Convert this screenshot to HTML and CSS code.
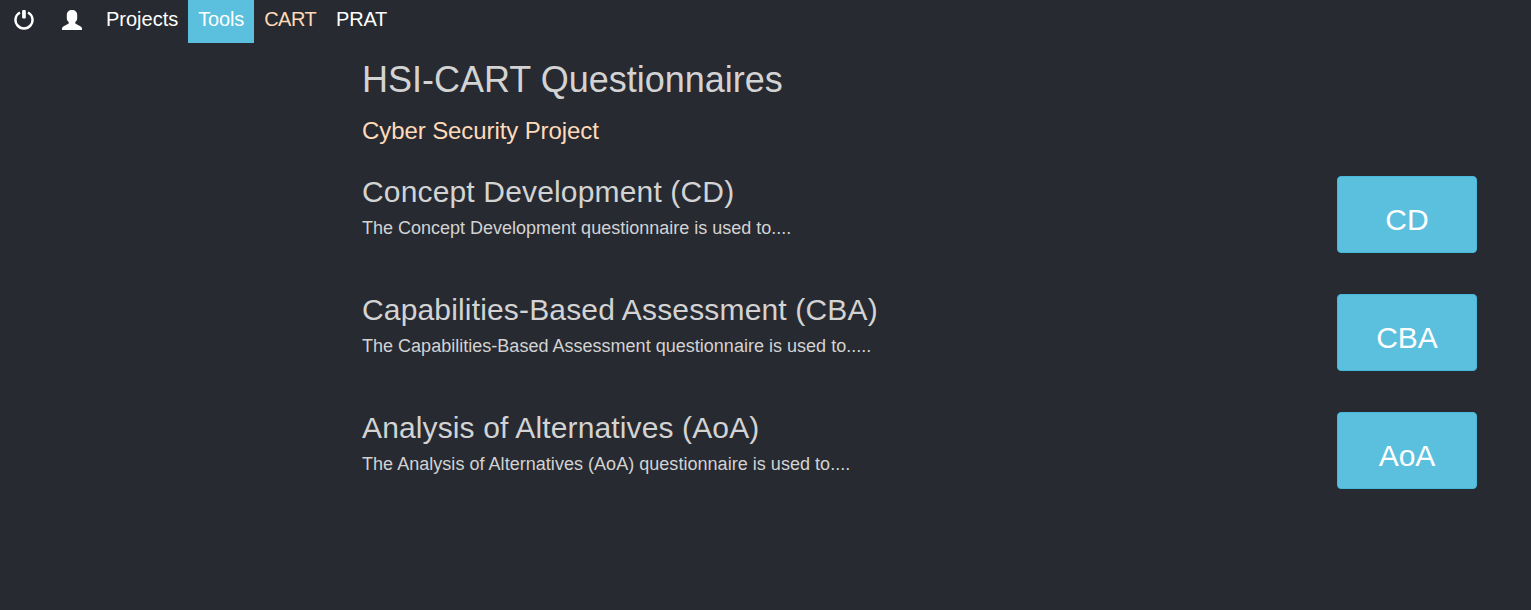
FILE: index.html
```html
<!DOCTYPE html>
<html lang="en">
<head>
<meta charset="utf-8">
<title>HSI-CART Questionnaires</title>
<link rel="stylesheet" href="styles.css">
</head>
<body>
<nav class="navbar">
  <a class="nav-icon" aria-label="Log out"><svg width="20" height="20" viewBox="0 0 20 20"><path d="M6 2.500A8.500 8.500 0 1 0 14 2.500" fill="none" stroke="#fff" stroke-width="2.500"/><rect x="8.100" y="0" width="3.700" height="8.400" rx="1" fill="#fff"/></svg></a>
  <a class="nav-icon" aria-label="Account"><svg width="20" height="20" viewBox="0 0 20 20"><path d="M10 0c3.200 0 5.200 2 5.200 5v3c0 1.700-.6 3-1.900 4v1.500L18.700 16.500Q20 17.300 20 18.500V20H0v-1.500q0-1.200 1.300-2L6.700 13.500v-1.500C5.400 11 4.800 9.700 4.800 8V5c0-3 2-5 5.200-5z" fill="#fff"/></svg></a>
  <a class="nav-link">Projects</a>
  <a class="nav-link active">Tools</a>
  <a class="nav-link current">CART</a>
  <a class="nav-link last">PRAT</a>
</nav>
<main class="content">
  <h1>HSI-CART Questionnaires</h1>
  <h2>Cyber Security Project</h2>
  <section class="row">
    <div><h3>Concept Development (CD)</h3><p>The Concept Development questionnaire is used to....</p></div>
    <button class="btn">CD</button>
  </section>
  <section class="row">
    <div><h3>Capabilities-Based Assessment (CBA)</h3><p class="cba">The Capabilities-Based Assessment questionnaire is used to.....</p></div>
    <button class="btn">CBA</button>
  </section>
  <section class="row">
    <div><h3 class="aoa-title">Analysis of Alternatives (AoA)</h3><p class="aoa">The Analysis of Alternatives (AoA) questionnaire is used to....</p></div>
    <button class="btn">AoA</button>
  </section>
</main>
</body>
</html>
```
FILE: styles.css
```css
* { box-sizing: border-box; }
body { margin: 0; min-height: 610px; background: #272a31; color: #d3d3d3; font-family: "Liberation Sans", Arial, sans-serif; }
.navbar { display: flex; height: 43px; font-size: 20px; line-height: 20px; color: #fff; }
.nav-icon { width: 48px; padding: 10px 14px; }
.nav-icon svg { display: block; }
.nav-link { padding: 9px 10px; }
.active { background: #5bc0de; letter-spacing: -0.15px; }
.current { color: #ffdab9; letter-spacing: -0.55px; }
.last { letter-spacing: -0.25px; }
.content { padding: 17px 54px 0 362px; }
h1, h2, h3, p { margin: 0; font-weight: 400; }
h1 { font-size: 36px; line-height: 40px; }
h2 { margin-top: 18px; font-size: 24px; line-height: 26px; color: #ffdab9; letter-spacing: -0.09px; }
.row { display: flex; justify-content: space-between; height: 118px; }
h2 + .row { margin-top: 32px; }
h3 { font-size: 30px; line-height: 31px; letter-spacing: 0.16px; }
.aoa-title { letter-spacing: 0.13px; }
p { margin-top: 8px; font-size: 18px; line-height: 26px; }
.cba { letter-spacing: 0.016px; }
.aoa { letter-spacing: 0.032px; }
.btn { width: 140px; height: 77px; padding: 10px 0 0; border: 1px solid #46b8da; border-radius: 4px; background: #5bc0de; color: #fff; font: 30px "Liberation Sans", Arial, sans-serif; }
```
